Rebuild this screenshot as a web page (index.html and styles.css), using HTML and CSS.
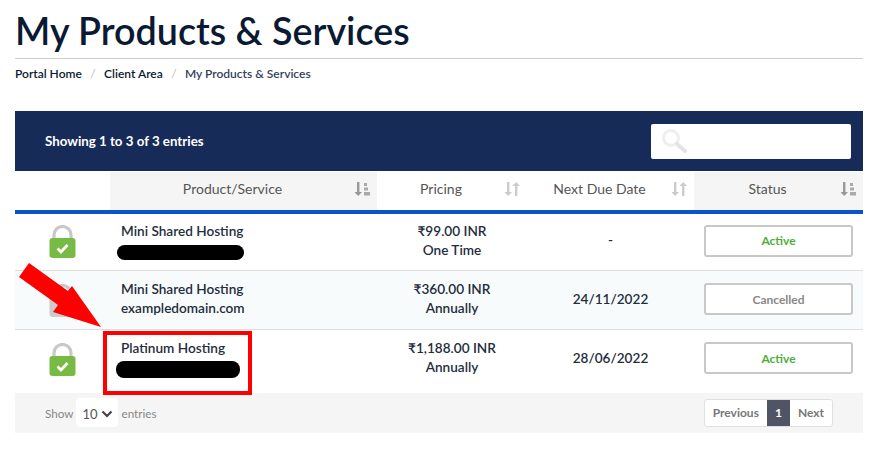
FILE: index.html
```html
<!DOCTYPE html>
<html>
<head>
  <title>My Products & Services</title>
  <link rel="stylesheet" href="styles.css">
</head>
<body>
  <div class="page">
    <h1 class="title">My Products &amp; Services</h1>
    <div class="crumbs">
      <a>Portal Home</a><span class="sep">/</span><a>Client Area</a><span class="sep">/</span><span class="here">My Products &amp; Services</span>
    </div>

    <div class="band">
      <div class="showing">Showing 1 to 3 of 3 entries</div>
      <div class="search">
        <svg width="26" height="26" viewBox="0 0 26 26"><circle cx="10" cy="10" r="7.5" fill="none" stroke="#eeeeee" stroke-width="3"/><path d="M16 16l8 7" stroke="#e4e4e4" stroke-width="4" stroke-linecap="round"/></svg>
      </div>
    </div>

    <table class="list">
      <colgroup>
        <col class="c-icon"><col class="c-prod"><col class="c-price"><col class="c-date"><col class="c-status">
      </colgroup>
      <thead>
        <tr>
          <th class="blank"></th>
          <th class="sorted">Product/Service<svg class="sort" width="16" height="14" viewBox="0 0 16 14"><path d="M2 0h2.400v10h2.600l-3.800 4-3.800-4h2.600z" fill="#999"/><path d="M9 1h3v3h-3zM9 5.500h4v3h-4zM9 10h6v3.500h-6z" fill="#aaa"/></svg></th>
          <th>Pricing<svg class="sort" width="16" height="14" viewBox="0 0 16 14"><path d="M2 0h2.400v10h2.600l-3.800 4-3.800-4h2.600z" fill="#ccc"/><path d="M10 14h2.400v-10h2.600l-3.800-4-3.800 4h2.600z" fill="#ccc"/></svg></th>
          <th>Next Due Date<svg class="sort" width="16" height="14" viewBox="0 0 16 14"><path d="M2 0h2.400v10h2.600l-3.800 4-3.800-4h2.600z" fill="#ccc"/><path d="M10 14h2.400v-10h2.600l-3.800-4-3.800 4h2.600z" fill="#ccc"/></svg></th>
          <th class="sorted">Status<svg class="sort" width="16" height="14" viewBox="0 0 16 14"><path d="M2 0h2.400v10h2.600l-3.800 4-3.800-4h2.600z" fill="#999"/><path d="M9 1h3v3h-3zM9 5.500h4v3h-4zM9 10h6v3.500h-6z" fill="#aaa"/></svg></th>
        </tr>
      </thead>
      <tbody>
        <tr>
          <td class="ico"><svg width="27" height="33" viewBox="0 0 27 33"><path d="M5 14V10a8.500 8.500 0 0 1 17 0v4" fill="none" stroke="#c8c8c8" stroke-width="3.200"/><rect x="0.500" y="13" width="26" height="20" rx="3" fill="#78bb44"/><path d="M8.500 23.500l3.500 3.500 6.500-7" fill="none" stroke="#fff" stroke-width="2.800"/></svg></td>
          <td class="prod"><div>Mini Shared Hosting</div><div class="redact r1"></div></td>
          <td class="mid"><div>₹99.00 INR</div><div>One Time</div></td>
          <td class="mid">-</td>
          <td class="stat"><div class="pill active">Active</div></td>
        </tr>
        <tr class="tint">
          <td class="ico"><svg width="27" height="33" viewBox="0 0 27 33"><path d="M5 14V10a8.500 8.500 0 0 1 17 0v4" fill="none" stroke="#c8c8c8" stroke-width="3.200"/><rect x="0.500" y="13" width="26" height="20" rx="3" fill="#cccccc"/></svg></td>
          <td class="prod"><div>Mini Shared Hosting</div><div>exampledomain.com</div></td>
          <td class="mid"><div>₹360.00 INR</div><div>Annually</div></td>
          <td class="mid">24/11/2022</td>
          <td class="stat"><div class="pill cancelled">Cancelled</div></td>
        </tr>
        <tr>
          <td class="ico"><svg width="27" height="33" viewBox="0 0 27 33"><path d="M5 14V10a8.500 8.500 0 0 1 17 0v4" fill="none" stroke="#c8c8c8" stroke-width="3.200"/><rect x="0.500" y="13" width="26" height="20" rx="3" fill="#78bb44"/><path d="M8.500 23.500l3.500 3.500 6.500-7" fill="none" stroke="#fff" stroke-width="2.800"/></svg></td>
          <td class="prod"><div>Platinum Hosting</div><div class="redact r3"></div></td>
          <td class="mid"><div>₹1,188.00 INR</div><div>Annually</div></td>
          <td class="mid">28/06/2022</td>
          <td class="stat"><div class="pill active">Active</div></td>
        </tr>
      </tbody>
    </table>

    <div class="foot">
      <div class="len">Show <span class="pick">10<svg width="12" height="8" viewBox="0 0 12 8"><path d="M1.500 1.500l4.500 4.500 4.500-4.500" fill="none" stroke="#444" stroke-width="2.200"/></svg></span> entries</div>
      <div class="pager"><span>Previous</span><span class="on">1</span><span>Next</span></div>
    </div>
  </div>

  <!-- annotation drawn on top of the screenshot -->
  <div class="box"></div>
  <svg class="arrow" width="100" height="80" viewBox="0 0 100 80"><polygon points="14,3 53,31 57,26 86,67 38,52 43,45 4,17" fill="#ff0000"/></svg>
</body>
</html>
```

FILE: styles.css
```css
body {
  margin: 0;
  font-family: "Lato", "Open Sans", sans-serif;
  background-color: #fff;
  color: #1f2d3d;
}
.page {
  width: 848px;
  margin-left: 15px;
}
.title {
  margin: 0;
  height: 59px;
  box-sizing: border-box;
  padding-top: 9px;
  font-size: 37.7px;
  line-height: 44px;
  font-weight: 600;
  color: #0b1a33;
  border-bottom: 1px solid #cccccc;
}
.crumbs {
  height: 52px;
  padding-top: 7px;
  box-sizing: border-box;
  font-size: 12px;
  line-height: 16px;
  font-weight: 600;
  color: #0b1a33;
}
.crumbs .sep {
  color: #bbbbbb;
  font-weight: 400;
  margin: 0 8.4px;
}
.crumbs .here {
  color: #33415c;
}
.band {
  height: 60px;
  background-color: #172b58;
  display: flex;
  align-items: center;
  justify-content: space-between;
  padding: 0 12px 0 30px;
}
.showing {
  color: #fff;
  font-size: 13.3px;
  font-weight: 700;
}
.search {
  width: 200px;
  height: 35px;
  background-color: #fff;
  border-radius: 2px;
  display: flex;
  align-items: center;
  padding-left: 10px;
  box-sizing: border-box;
}
.list {
  width: 848px;
  table-layout: fixed;
  border-collapse: collapse;
  font-size: 13.6px;
}
.c-icon { width: 95px; }
.c-prod { width: 267px; }
.c-price { width: 150px; }
.c-date { width: 167px; }
.c-status { width: 169px; }
.list th {
  height: 40px;
  padding: 0 22px 4px 0;
  box-sizing: border-box;
  position: relative;
  font-size: 14px;
  font-weight: 400;
  color: #555555;
  text-align: center;
  border-top: 1px solid #fff;
  border-bottom: 4px solid #0a53c9;
}
.list th.sorted {
  background-color: #f5f5f5;
}
.sort {
  position: absolute;
  right: 6px;
  top: 10px;
}
.list td {
  height: 59px;
  padding: 0 0 2px;
  box-sizing: border-box;
  border-bottom: 1px solid #dddddd;
  line-height: 19px;
  font-weight: 600;
}
.list td.ico {
  padding-bottom: 0;
}
.list tbody tr:last-child td {
  border-bottom: none;
}
.tint td {
  background-color: #f8fbfc;
}
.ico {
  text-align: center;
}
.ico svg {
  display: block;
  margin: 0 auto;
}
.list td.prod {
  padding-left: 11px;
}
.mid {
  text-align: center;
}
.redact {
  background-color: #000;
  border-radius: 8px;
}
.r1 {
  width: 127px;
  height: 15px;
  margin-left: -4px;
  margin-top: 4px;
  margin-bottom: -1px;
}
.r3 {
  width: 124px;
  height: 17px;
  margin-left: -5px;
  margin-top: 3px;
  margin-bottom: -1px;
}
.list td.stat {
  padding-left: 10px;
  padding-right: 10px;
}
.pill {
  height: 32px;
  box-sizing: border-box;
  border: 2px solid #c8c8c8;
  border-radius: 3px;
  background-color: #fff;
  display: flex;
  align-items: center;
  justify-content: center;
  font-size: 12px;
  font-weight: 700;
}
.pill.active {
  color: #4caf3a;
}
.pill.cancelled {
  color: #888888;
}
.foot {
  margin-top: 4px;
  height: 40px;
  background-color: #f5f5f5;
  display: flex;
  align-items: center;
  justify-content: space-between;
  padding: 0 30px;
  font-size: 11.7px;
  color: #888888;
}
.len {
  display: flex;
  align-items: center;
  gap: 3px;
}
.pick {
  width: 42px;
  height: 29px;
  background-color: #fff;
  border-radius: 4px;
  box-sizing: border-box;
  padding: 2px 5px 0 6px;
  display: flex;
  align-items: center;
  justify-content: space-between;
  font-size: 13px;
  color: #555555;
}
.pager {
  display: flex;
  height: 26px;
  background-color: #fff;
  border: 1px solid #e0e0e0;
  border-radius: 3px;
  font-size: 12px;
  font-weight: 700;
  color: #777777;
}
.pager span {
  padding: 0 8px;
  line-height: 26px;
}
.pager .on {
  background-color: #4f5566;
  color: #fff;
}
.box {
  position: absolute;
  left: 103px;
  top: 331px;
  width: 149px;
  height: 64px;
  box-sizing: border-box;
  border: 4px solid #ff0000;
}
.arrow {
  position: absolute;
  left: 15px;
  top: 260px;
}
```
